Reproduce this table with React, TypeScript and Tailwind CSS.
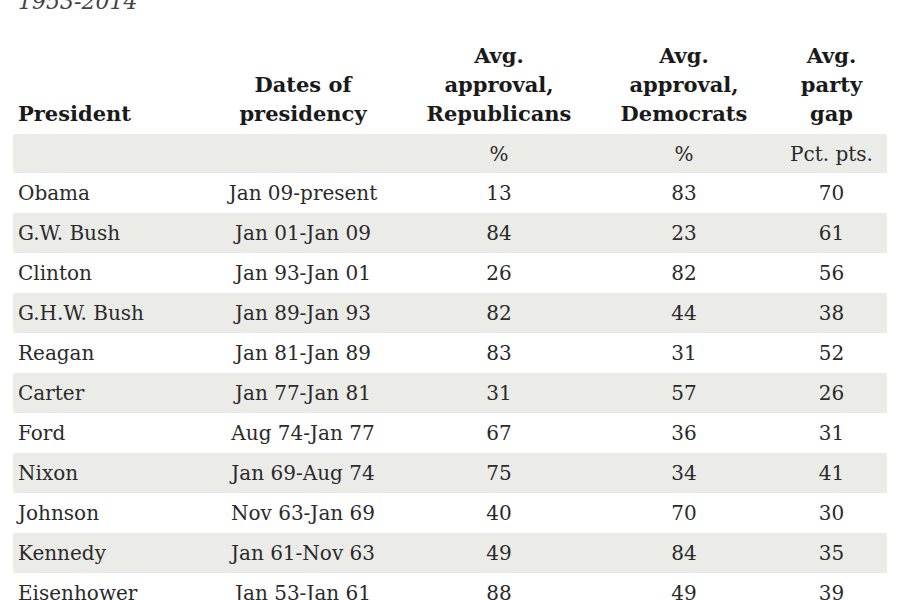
const rows = [
  ["Obama", "Jan 09-present", "13", "83", "70"],
  ["G.W. Bush", "Jan 01-Jan 09", "84", "23", "61"],
  ["Clinton", "Jan 93-Jan 01", "26", "82", "56"],
  ["G.H.W. Bush", "Jan 89-Jan 93", "82", "44", "38"],
  ["Reagan", "Jan 81-Jan 89", "83", "31", "52"],
  ["Carter", "Jan 77-Jan 81", "31", "57", "26"],
  ["Ford", "Aug 74-Jan 77", "67", "36", "31"],
  ["Nixon", "Jan 69-Aug 74", "75", "34", "41"],
  ["Johnson", "Nov 63-Jan 69", "40", "70", "30"],
  ["Kennedy", "Jan 61-Nov 63", "49", "84", "35"],
  ["Eisenhower", "Jan 53-Jan 61", "88", "49", "39"],
];

const grid = "grid grid-cols-[187px_206px_186px_184px_111px]";

export default function App() {
  return (
    <div className="h-[600px] w-[900px] overflow-hidden bg-white font-['DejaVu_Serif',serif] text-[#2a2a2a]">
      <div className="ml-[18px] mt-[-9px] text-[22px] italic leading-[22px] text-[#444]">1953-2014</div>

      <div className="ml-[13px] w-[874px]">
        <div className={`${grid} mt-[28px] items-end pb-[6px] text-[21px] font-bold leading-[29px] text-[#1a1a1a]`}>
          <div className="pl-[5px]">President</div>
          <div className="text-center">
            Dates of
            <br />
            presidency
          </div>
          <div className="text-center">
            Avg.
            <br />
            approval,
            <br />
            Republicans
          </div>
          <div className="text-center">
            Avg.
            <br />
            approval,
            <br />
            Democrats
          </div>
          <div className="text-center">
            Avg.
            <br />
            party
            <br />
            gap
          </div>
        </div>

        <div className={`${grid} h-[39px] items-center bg-[#ebebe8] text-[20px]`}>
          <div />
          <div />
          <div className="text-center">%</div>
          <div className="text-center">%</div>
          <div className="text-center">Pct. pts.</div>
        </div>

        {rows.map((r, i) => (
          <div
            key={r[0]}
            className={`${grid} h-[40px] items-center text-[20px] ${i % 2 === 1 ? "bg-[#ebebe8]" : ""}`}
          >
            <div className="pl-[5px]">{r[0]}</div>
            <div className="text-center">{r[1]}</div>
            <div className="text-center">{r[2]}</div>
            <div className="text-center">{r[3]}</div>
            <div className="text-center">{r[4]}</div>
          </div>
        ))}
      </div>
    </div>
  );
}
